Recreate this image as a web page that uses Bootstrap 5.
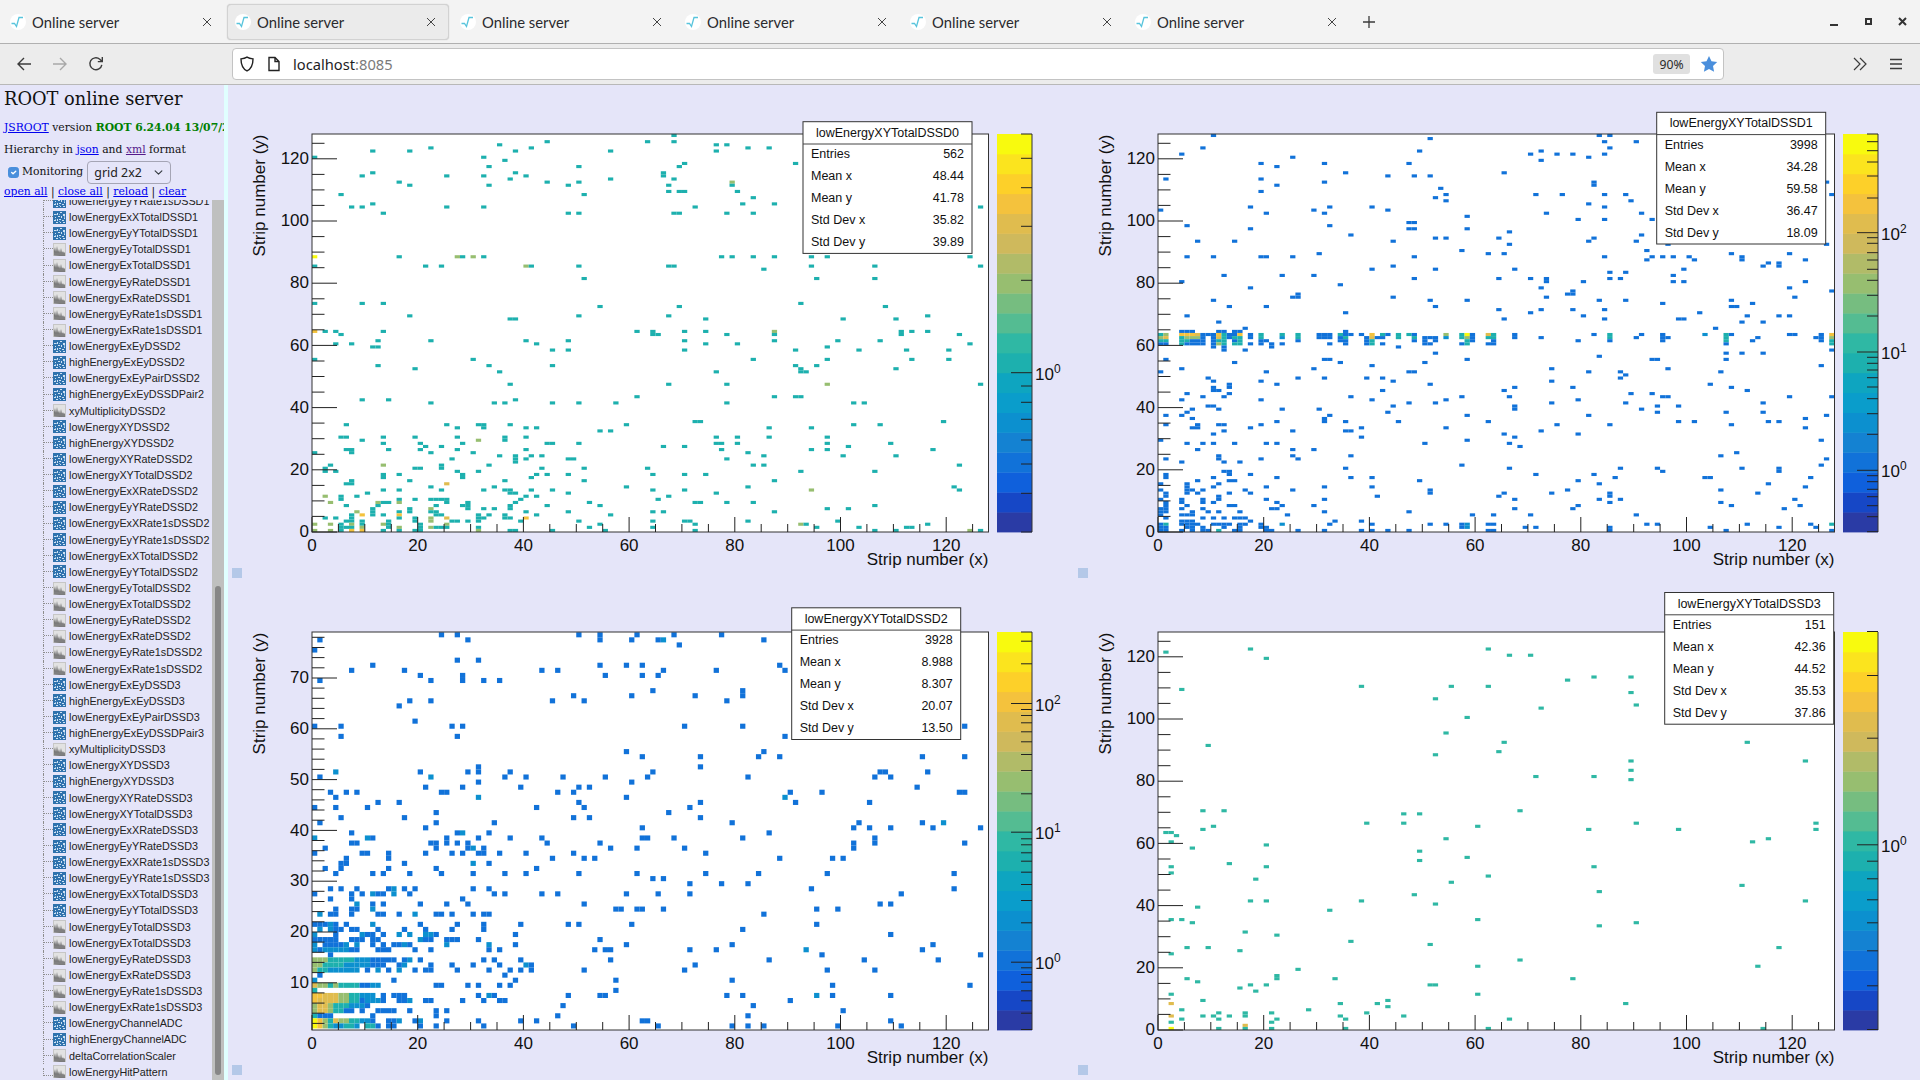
<!DOCTYPE html>
<html lang="en">
<head>
<meta charset="utf-8">
<title>Online server</title>
<link href="https://cdn.jsdelivr.net/npm/bootstrap@5.3.0/dist/css/bootstrap.min.css" rel="stylesheet">
<style>
html,body{height:1080px;overflow:hidden;background:#e5e5f9;}
body{font-family:"Liberation Sans",Arial,sans-serif;}
.tabbar{height:43px;background:#f3f3f3;padding-top:4px;}
.chrome-tab{width:225px;height:36px;padding:0 8px 0 9px;font:14.8px Lato,"Noto Sans",sans-serif;color:#2a2a2e;border:1px solid transparent;border-radius:4px;}
.chrome-tab.active{background:#ebebeb;border-color:#d2d2d2;box-shadow:0 0 1px #bbb;width:222px;margin:0 1px 0 2px;padding-left:7px;}
.chrome-tab .lbl{margin-left:6px;}
.plus{width:36px;height:36px;margin-left:1px;}
.win{margin-left:auto;padding-right:4px;}
.win svg{display:block;}
.toolbar{height:42px;background:#ececec;border-top:1px solid #b0b0b0;border-bottom:1px solid #b8b8b8;padding:0 6px;}
.tb-btn{width:36px;height:36px;}
.urlbar{width:1492px;height:32px;margin-left:118px;background:#fff;border:1px solid #c3c3c3;border-radius:4px;font:14.7px "Noto Sans",sans-serif;color:#1d1d1f;padding:0 5px 0 6px;}
.urlbar .dim{color:#7a7a7a;}
.zoomp{width:37px;height:20px;background:#e0e0e0;border-radius:3px;font-size:12.2px;color:#2a2a2a;margin-left:auto;margin-right:10px;}
.main{height:995px;}
.side{width:224px;background:#e5e5f9;font-family:"DejaVu Serif",serif;color:#111;white-space:nowrap;}
.side a{color:#0000ee;text-decoration:underline;}
.side a.vis{color:#551a8b;}
.side h1{font-size:17.8px;font-weight:400;margin:0;padding:2px 0 0 4px;height:26px;line-height:24px;color:#111;}
.side .ln{font-size:10.8px;padding-left:4px;overflow:hidden;}
.ln1{margin-top:6px;height:22px;line-height:22px;}
.ln2{height:22px;line-height:22px;}
.ln3{height:23px;padding-left:8px!important;}
.side .ln4{height:16px;line-height:15px;}
.ok{color:#008000;font-weight:700;}
.mon{width:11px;height:11px;margin:1px 3px 0 0;border-radius:2px;background-color:#4a8fdc;border-color:#4a8fdc;}
.mon:checked{background-color:#4a8fdc;border-color:#4a8fdc;}
.gridsel{width:84px;height:23px;min-height:0;padding:0 0 0 6px;margin-left:4px;font:12.4px "Noto Sans",sans-serif;color:#222;background-color:transparent;border:1px solid #a5a5b5;border-radius:4px;background-position:right 6px center;background-size:11px 9px;}
.treewrap{height:880px;}
.tree{width:212px;padding-left:43px;overflow:hidden;font-family:"Liberation Sans",sans-serif;font-size:10.8px;color:#222;}
.tree-in{margin-top:-7px;}
.t-row{height:16.13px;}
.t-join{width:10px;height:100%;border-left:1px dotted #8d8d8d;flex:none;}
.t-join::before{content:"";display:block;height:50%;border-bottom:1px dotted #8d8d8d;}
.t-row:last-child .t-join{height:50%;}
.t-row:last-child .t-join::before{height:100%;}
.t-ic{width:13px;height:13px;flex:none;margin-right:3px;}
.sb{width:12px;background:#bfc0bf;padding:386px 3px 0;}
.sb i{display:block;width:6px;height:489px;border-radius:3px;background:#878787;}
.splitter{width:4px;background:#e0ffff;}
.plots{width:1692px;background:#e5e5f9;}
.cell{height:497.5px;}
.cell svg.plot{display:block;width:846px;height:497.5px;font-family:"Liberation Sans",sans-serif;}
.jsb{left:4px;bottom:5px;width:10px;height:10px;background:#b4c8e8;}
</style>
</head>
<body>
<svg width="0" height="0" class="position-absolute">
 <symbol id="fav" viewBox="0 0 16 16"><circle cx="8" cy="8" r="8" fill="#fff"/><path d="M1.5 9.5h3l2 3 2.5-9h4" fill="none" stroke="#58c4dc" stroke-width="1.3"/></symbol>
 <symbol id="xx" viewBox="0 0 10 10"><path d="M1 1l8 8M9 1l-8 8" stroke="#444" stroke-width="1" fill="none"/></symbol>
 <symbol id="h1" viewBox="0 0 13 13"><rect x=".5" y=".5" width="12" height="12" fill="#e2e2e2" stroke="#c6c6c6"/><path d="M1 12V8l1-4 1 5 1-6 1 6 1-3 1 4 1-5 1 5 1-2 1 3 1 1v2z" fill="#777"/><path d="M1 12.500v-3h11v3z" fill="#808080"/></symbol>
 <symbol id="h2" viewBox="0 0 13 13"><rect width="13" height="13" fill="#2f72ad"/><path d="M1 3h2v1H1zM4 2h1v2H4zM7 1h2v1H7zM10 3h2v2h-2zM2 6h1v1H2zM5 5h2v1H5zM8 5h1v2H8zM11 7h1v1h-1zM1 9h2v1H1zM4 8h1v2H4zM6 8h2v1H6zM9 9h2v1H9zM3 11h2v1H3zM7 11h1v1H7zM10 11h2v1h-2z" fill="#cfe2f3"/><path d="M3 3h1v1H3zM6 3h1v1H6zM2 8h1v1H2zM6 10h1v1H6zM11 5h1v2h-1z" fill="#8ab8e0"/></symbol>
</svg>

<div class="tabbar d-flex align-items-start" id="tabs"></div>

<div class="toolbar d-flex align-items-center">
 <div class="tb-btn d-flex align-items-center justify-content-center"><svg width="16" height="16" viewBox="0 0 16 16"><path d="M15 8H2M8 2L2 8l6 6" fill="none" stroke="#3b3b3b" stroke-width="1.4"/></svg></div>
 <div class="tb-btn d-flex align-items-center justify-content-center"><svg width="16" height="16" viewBox="0 0 16 16"><path d="M1 8h13M8 2l6 6-6 6" fill="none" stroke="#a8a8a8" stroke-width="1.4"/></svg></div>
 <div class="tb-btn d-flex align-items-center justify-content-center"><svg width="16" height="16" viewBox="0 0 16 16"><path d="M13.800 8.800A6 6 0 1 1 11.800 3.200L14 5.400M14.300 1v4.600H9.800" fill="none" stroke="#3b3b3b" stroke-width="1.4"/></svg></div>
 <div class="urlbar d-flex align-items-center">
  <svg width="16" height="16" viewBox="0 0 16 16" class="me-1"><path d="M8 1.200c2 1.300 4 1.600 6 1.700 0 6-2 10-6 12-4-2-6-6-6-12 2-.1 4-.4 6-1.700z" fill="none" stroke="#222" stroke-width="1.4"/></svg>
  <svg width="14" height="16" viewBox="0 0 14 16" class="ms-2 me-2"><path d="M2 1.500h6l4 4v9H2zM8 1.500v4h4" fill="none" stroke="#222" stroke-width="1.4"/></svg>
  <span class="ms-1">localhost<span class="dim">:8085</span></span>
  <span class="zoomp d-flex align-items-center justify-content-center">90%</span>
  <svg width="18" height="18" viewBox="0 0 18 18"><path d="M9 1l2.500 5.300 5.700.7-4.200 4 1.100 5.700L9 14l-5.100 2.700L5 11 .8 7l5.700-.7z" fill="#4a8fdc"/></svg>
 </div>
 <div class="tb-btn d-flex align-items-center justify-content-center ms-auto"><svg width="16" height="16" viewBox="0 0 16 16"><path d="M2 2l6 6-6 6M8 2l6 6-6 6" fill="none" stroke="#3b3b3b" stroke-width="1.2"/></svg></div>
 <div class="tb-btn d-flex align-items-center justify-content-center"><svg width="16" height="16" viewBox="0 0 16 16"><path d="M2 3.500h12M2 8h12M2 12.500h12" fill="none" stroke="#3b3b3b" stroke-width="1.3"/></svg></div>
</div>

<div class="main d-flex">
 <div class="side d-flex flex-column overflow-hidden flex-none">
  <h1>ROOT online server</h1>
  <div class="ln ln1"><a href="#">JSROOT</a> version <span class="ok">ROOT 6.24.04 13/07/2021</span></div>
  <div class="ln ln2">Hierarchy in <a href="#">json</a> and <a href="#" class="vis">xml</a> format</div>
  <div class="ln ln3 d-flex align-items-center">
   <input class="form-check-input mon mt-0" type="checkbox" checked>
   <span>Monitoring</span>
   <select class="form-select gridsel"><option>grid 2x2</option></select>
  </div>
  <div class="ln ln4"><a href="#">open all</a> | <a href="#">close all</a> | <a href="#">reload</a> | <a href="#">clear</a></div>
  <div class="treewrap d-flex">
   <div class="tree"><div class="tree-in" id="tree"></div></div>
   <div class="sb"><i></i></div>
  </div>
 </div>
 <div class="splitter flex-none"></div>
 <div class="plots"><div class="row g-0" id="plots"></div></div>
</div>

<script>
// browser tabs
(function(){
 var h='';
 for(var i=0;i<6;i++){
  h+='<div class="chrome-tab d-flex align-items-center'+(i==1?' active':'')+'"><svg width="16" height="16"><use href="#fav"/></svg><span class="lbl">Online server</span><svg width="10" height="10" class="ms-auto me-1"><use href="#xx"/></svg></div>';
 }
 h+='<div class="plus d-flex align-items-center justify-content-center"><svg width="14" height="14" viewBox="0 0 14 14"><path d="M7 1v12M1 7h12" stroke="#3b3b3b" stroke-width="1.3"/></svg></div>';
 h+='<div class="win d-flex"><svg width="102" height="36" viewBox="0 0 102 36"><path d="M16 21h8" stroke="#333" stroke-width="2"/><rect x="52" y="15" width="5" height="5" fill="none" stroke="#333" stroke-width="2"/><path d="M85 14l7 7M92 14l-7 7" stroke="#333" stroke-width="2"/></svg></div>';
 document.getElementById('tabs').innerHTML=h;
})();
// tree
(function(){
 function block(n){return [['lowEnergyExEyDSSD'+n,2],['highEnergyExEyDSSD'+n,2],['lowEnergyExEyPairDSSD'+n,2],['highEnergyExEyDSSDPair'+n,2],['xyMultiplicityDSSD'+n,1],['lowEnergyXYDSSD'+n,2],['highEnergyXYDSSD'+n,2],['lowEnergyXYRateDSSD'+n,2],['lowEnergyXYTotalDSSD'+n,2],['lowEnergyExXRateDSSD'+n,2],['lowEnergyEyYRateDSSD'+n,2],['lowEnergyExXRate1sDSSD'+n,2],['lowEnergyEyYRate1sDSSD'+n,2],['lowEnergyExXTotalDSSD'+n,2],['lowEnergyEyYTotalDSSD'+n,2]].concat(tail(n));}
 function tail(n){return [['lowEnergyEyTotalDSSD'+n,1],['lowEnergyExTotalDSSD'+n,1],['lowEnergyEyRateDSSD'+n,1],['lowEnergyExRateDSSD'+n,1],['lowEnergyEyRate1sDSSD'+n,1],['lowEnergyExRate1sDSSD'+n,1]];}
 var rows=[['lowEnergyEyYRate1sDSSD1',2],['lowEnergyExXTotalDSSD1',2],['lowEnergyEyYTotalDSSD1',2]].concat(tail(1),block(2),block(3),[['lowEnergyChannelADC',2],['highEnergyChannelADC',2],['deltaCorrelationScaler',1],['lowEnergyHitPattern',1]]);
 document.getElementById('tree').innerHTML=rows.map(function(r){return '<div class="t-row d-flex align-items-center"><span class="t-join"></span><svg class="t-ic"><use href="#h'+r[1]+'"/></svg><span>'+r[0]+'</span></div>';}).join('');
})();
// plots
var P=['#2a3ba5','#1647c6','#0f60dc','#1172d9','#1482d2','#0c90cf','#0a9dcb','#0ea5c0','#1db0ae','#2fb8a4','#54bc92','#76bd80','#97be70','#b1bb68','#cfb95c','#e0bc4e','#f4c23d','#fdd029','#fbe41e','#f8fa0e'];
var L={b:P[3],c:P[5],t:P[8],e:P[9],g:P[12],s:P[15],o:P[16],y:P[19]};
var BW=5.285;
var plots=[
 {cx:228,cy:85,name:'lowEnergyXYTotalDSSD0',st:[575,36.7],v:['562','48.44','41.78','35.82','39.89'],bh:3.11,y0:0,ys:[0,20,40,60,80,100,120],ym:5,ymax:128,
  pal:[[134],[158.3],[187.7],[226.3],[280.3],[372.7,'0'],[386],[402.3],[419.3],[440],[464],[493.3],[532]],m:{}},
 {cx:1074,cy:85,name:'lowEnergyXYTotalDSSD1',st:[582.7,27.3],v:['3998','34.28','59.58','36.47','18.09'],bh:3.11,y0:0,ys:[0,20,40,60,80,100,120],ym:5,ymax:128,pal:[],m:{}},
 {cx:228,cy:582.5,name:'lowEnergyXYTotalDSSD2',st:[563.7,24.8],v:['3928','8.988','8.307','20.07','13.50'],bh:5.08,y0:.7,ys:[10,20,30,40,50,60,70],ym:2,ymax:79,pal:[],m:{}},
 {cx:1074,cy:582.5,name:'lowEnergyXYTotalDSSD3',st:[590.7,9.5],v:['151','42.36','44.52','35.53','37.86'],bh:3.11,y0:0,ys:[0,20,40,60,80,100,120],ym:5,ymax:128,pal:[],m:{}}
];
(function(){
 var a=[141.7,150.7,162,176,198,[232.7,'2']];
 [8,25,53,75,103,136,181,243,[351,'1'],367,385,405,428,456,491,536,598,[706,'0'],722,740,763,785,812,845,890].forEach(function(z){a.push(Array.isArray(z)?[235+z[0]/3,z[1]]:235+z/3);});
 plots[1].pal=[134].concat(a).map(function(t){return Array.isArray(t)?t:[t];});
 var b=[122,190,[309,'2'],327,345,367,394,424,462,510,580,[695,'1'],715,733,757,782,815,852,900,967,[1085,'0'],1102,1122,1145,1171,1201,1238,1287];
 plots[2].pal=[[631.5]].concat(b.map(function(z){return Array.isArray(z)?[600+z[0]/3,z[1]]:[600+z/3];}));
 var c=[153,285,473,[793,'0'],842,895,958,1027,1111,1216,1347];
 plots[3].pal=c.map(function(z){return Array.isArray(z)?[580+z[0]/3,z[1]]:[580+z/3];});
})();
function add(i,ox,oy,kx,ky,def,str){
 var p=plots[i];
 str.split(';').forEach(function(g){
  var q=g.trim().split(':'); if(q.length<2)return;
  var zy=parseFloat(q[0]);
  q[1].split(',').forEach(function(t){
   var x=parseFloat(t), l=t.replace(/[0-9.\s]/g,'')||def;
   var lx=ox+x/kx-p.cx, ly=oy+zy/ky-p.cy;
   var col=Math.floor((lx-84)/BW), row=Math.floor((447-ly)/p.bh+p.y0);
   if(col<0||col>127||row<0)return;
   p.m[col+'_'+row]=[col,row,L[l]];
  });
 });
}
// plot 0
add(0,220,110,2.8,3,'t',"76:1272;95:1272,916,1199;104:782,1390,1419;114:591,872,1480,1537;123:429,531,827,1093,1390;142:265,739;152:797;161:1301;170:754,1006,1287;189:827,429,1241;199:398,634,739,857,1241;208:812,1093,1272;217:502,916,1006,1435g;226:1435,531,754,975,1257;245:1257,1287,1301,1450;254:338,1021;264:1493;282:429,1465,1552;292:368,398,634,739,1331;310:459,975,1006,1272,1287,1419,1493;441:265y,502,665g,680,709g,739,1404,1435,1493,1552;469:265,576,620,857g,872,1006,1257,1272;479:1522;507:1021;581:265,398,459;590:1065,1287;618:531,1006,1257;628:812,827,1359;665:265o,294,324,459,1169,1213,1301,1359,1552g;674:338,1213,1228,1419,1552;692:444,591,857,975,1301,1552;701:324,368,887,1359,1450;711:429,444;720:931,975,1301;748:265,709,1493;767:444,754,931;777:546;787:782,1390;824:812,1257,1419;860:1169,1552;870:398,472,827;880:591,768,797,931,1006,1109,1419;936:1331,1345;945:354,634,724,739,812,1139;955:665,739,857,887,1537;964:1065,1093;982:338,354,459,546,665,797,857,1390,1450,1537;991:398,724g,797;1000:459,561,680,916,931,1006,1390,1404,1450;1010:576,620,1241,1301;1019:354,368,472,561,665,857,1404;1028:265,368,591,709,1480;1038:782,827,872,902,1522;1047:650,827,857,975,990,1419;1057:827;1066:310,459g,620,754,1493,1522;1075:294,546,561,620,902,1021,1199;1085:294,324,665,724;1094:459,502,680,887,916,975,1213,1301,1359;1104:459,680,872;1113:368,531,797,1021,1552;1122:354,368,634s;1131:591,768,1139,1480;1140:459,502,620,739,797,812,872,931,1213,1301;1150:413,812,827,975,1390;1160:294g,384,338,857,887,1257;1168:338,502,546,591,606,620,634,842,1228;1178:310g,444g,459,472,502g,634,695,827,1036,1331,1345,1419,1493;1188:354,444,680,695,812,606,916,1065;1197:429,531,591g,695,739,768,812;1206:384g,429,502,531,591,606,857,975,1213,1241,1552;1215:398o,368,429,459,502o,606,620,724,754,887,797,1093;1225:294,324,368,502,546,591g,634s,724,739,797,812,857o;1234:354,368,398,472,546,591g,650,665,695,724,842,1006,1213,1301,1316,1480;1243:265g,310g,338,368g,398,459g,472,561,634g,1065,1331;1253:338,354,368,398g,472,502g,561,591g,606,620,634,724,1036,1213;1262:265g,310g,338,368o,398o,459,502,546,561,724g,812,827,931,1078,1331");
add(0,780,110,3,3,'t',"161:48;292:601;441:93,142,569;469:93,284,601;507:110,284;581:64;590:317;618:443;628:190,349;665:365,396,443;674:365,540;692:174,300;701:569;711:142;720:48,237,381,507;748:142,396,507;767:48,110;777:64,349;787:64,78;824:142g,601;860:48,64;880:222,252;936:491;945:222,300;954:93;982:142;1000:142,333;1010:206;1019:93,142,459;1038:190,349;1066:540;1085:64,284;1131:524;1140:93g,540;1188:284;1197:142,206;1234:174;1243:64g,78,443;1253:110,237,381,396;1262:284,349,569g,601");
// plot 1
add(1,1150,125,3,3,'b',"32:191;41:842;69:158;79:809;88:96;97:428;116:334,524,777;125:382;144:586,1062;153:715,793,842;163:48,334;172:524;182:382;190:874;200:334;209:888;218:857;228:888;246:301,541,667;256:33,492,715;265:350,524;275:952;293:778,793;302:111,541;312:301,777,793,952;321:1075;330:602;339:857,888,1047;349:143,254,730;358:1075;377:935;386:508,1016,1062;396:111,191,334,350,428,793;433:667,857;424:730;452:223,398,492;462:793,1047;471:96;481:571;489:301;517:428,444,730;508:444;526:191,842,952;545:239,350,857;555:1047;564:586;573:111;583:1062;592:207;611:285;620:96,111,127,207,223,254,270,586;"+
"629:33t,48g,96o,111o,127o,143s,158,175,191,207o,223t,239,254,270o,301,334t,398t,444t,508,524,541,571t,586,602,635,667o,699t,715,745t,777t,793,888g,935t,952y,968,1016s,1032t;"+
"638:33g,48s,96t,111g,127g,143g,158,191,207s,223t,239,254t,270t,301,334t,398c,444t,508,524,541,571,586t,650,667s,683,699,745t,793t,825,841,857,888c,935t,952g,968,1016t,1032t;"+
"648:33t,48t,96t,111t,127,143,158,191,207t,223t,254,270t,334,350,444,571,586,650,667t,793,825,857,952t,968,1032;"+
"657:33,48,96t,111,127,143,158,191,207g,223t,254t,270t,301,334,365,398,541,586,650,667t,699,825,841,935,952t,1016,1032;"+
"666:191,223,365,745;676:223,285;685:857;704:48,524,541,952;713:254,571,825;722:667;732:96,492;742:33,350,778,793;761:175,444,524,651,699;770:191,334,730;779:239,382,842;788:239,191;797:191,207,699,1062;806:111,239;816:158,223,602,935,1075;825:96,334,667,888;834:778,857;844:175,191,730;853:127,207,398,508;862:111,715;872:48,96,541,952;881:127,524;890:382,524,586,745,1016;900:48,143,207,223,334;909:127,143,301,634,888;918:223,428,586,602;927:191,1062;936:634;945:33,952;955:111,158,191,254,350,382,825,1075;973:143,428,492;993:207,428,602;1002:48,207,334,444;1012:96,223,270;1021:935;1030:586,1075;1040:223,239;1049:48,239,301;1058:48,191,382,602,667;1068:143,239,254,809;1077:33,111,207;1085:111,191,350,524,667;1095:33,111,127,158,285,428,842;1104:48,111,143,239,301,842,1062;1113:48,207,683,1047;1123:96,158,207,350,524,33;1132:96,158,191,382,48;1141:48,111,239,254,398,492;1150:33,48,96,158,365,382;1161:33,48,127,175,207,270,524,778;1170:33,96,111,127,413,968,1032;1180:48,158,191,223,254,270,285;1189:96,111,127,301,634,558;1198:33,48t,96,111,127,143,191,207,223,239,270,285,334,398c,541,667,842,888,935,952c,1016,1032;1207:33,48,111,127,158,223,270,334,350,935,952c;1216:33,48,96,127,158,175,207t,254,270,350,365,444,524,634,667,715,778,1016,1032");
add(1,1500,0,3,3,'b',"406:298,329;425:313,410;444:329;454:125;463:93,170,219,313;472:267;482:125;520:12;544:284,980;554:284;584:109,186,313,378,995;603:393;615:267;622:313;640:140,426;659:236,313,457");
add(1,1500,235,3,3,'b',"1:426;8:284;19:267,410;28:28;29:505,980;47:442;57:12,695,870;66:313,457,487,520,568,727;76:442,585,918,727;85:805,836;94:789,836;104:44,553;113:329,378;123:520;132:93,139,329,361;141:139,252,520,553,918;159:125,870;170:219,996;178:203,219;187:139,886;197:298,378,695;206:488,759;215:696,712;225:125,219,313;234:93,601;243:252,743,838,870;253:12,313,536,552;262:727,789;282:647;298:284,426,696,870,886,44,488,616c,329t,679t,964,995o;308:44,125,329t,410,488,505,679t,772,948,964,995g;317:236,329,488,679t,759,964,995t;327:679,995t;345:995;355:679,727,789;364:298;374:460,475,679;393:964;402:155,504;412:267,361,662;421:378;430:361;440:155;449:630;458:44,219,695;467:12,743;477:393,457;486:28,488,504,870,996;495:236;505:155,378,789;514:44,472,536;524:44,426;533:472,679,789;542:267,980;552:918;561:536,584,805,838;570:171,329,695;580:918;589:125;598:12,236;607:44;617:964;626:28;635:60;654:711;664:662;673:980;692:964;701:28,361,472,727,838;710:488,838;720:109,284;729:345,616,632,932;738:236;748:298,805;757:918;766:203,662;775:12,155,329,773;785:329;794:44,298,361,886;803:329,662;813:236,695,902;822:44,219,853;841:93,410;869:442,472,743,932,996t;878:76,109,329,630,838,948;888:329,679,996");
// plot 2
add(2,220,600,2.8,3,'b',"100:620,665,1006,1063,1169,1272,1404;115:280,695,1063,1154,1228,1241c,1522;130:1287;146:265;177:665,724;192:429,1063,1139,1184,1565;207:368,516,903,946,1242,1389;222:561,680,1078,1184,1228;237:280,591,680,739,782;268:1213,1465;283:991,1154,1331,1465;298:531,591,931,1021,1419;314:502;360:546;376:265,338,650,680,1301,1465;406:338,665;452:1139,1522;467:1184,1345,1507,1565;497:724,1345;513:324c,561,695,724,812,1213;528:280,591c,797,857,960,1078,1199,1480;544:724,1154;559:576,680,842,1006,1036;575:310,354,384,620,634,946,991;590:324,724c,1139;605:444,502,1006,1345;621:265,324,413,887,1021,1316;636:606,1257;650:338,516,991,1036,1345;666:280,606,768,1435;682:576,1184;696:368,665,680c,754,1537;712:265c,413c,429,634,724,812,903,1184,1199,1272,1465;727:368,384,591,606,634,665,695,917,1063;742:294,606,695,710c,739,1093,1169,1301;758:265,398,413,472,576,650,680,724,739,782,857,991,1359;774:354,472,931,1021,1050,1565;788:338,354,516,710c,754;804:294,338,472,606,887;820:324,429,459,531,620,710,797,857,1006,1169,1359,1507;835:1213,1242;850:1316,1404,1480;866:310,338,384,472,487c,516,546,710,754;880:265,368,398,429c,444,459,487c,531,768,797,903,946,1139,1228,1316;895:310,368,680;911:384c,429,459,561,634,695,1021;926:324,368,384,429c,1109,1124,1169,1184,1242;941:280c,310,324,368,444,459,502,546c,606,620,650,710,739,754,1522;972:265,280,294,310c,324,354,429c,561,665,739,842,975,1006,1154;987:280c,310c,324,338,368,384,444,516,576,650,739,1465;1002:265c,324,398c,413,429,459,502c,531c,576c,591c,606,827;1018:265,280,294,310,324,368,384,398,429,444,561c,576,591,634,650,665,724,1064;1033:265c,294,310,324,338,354c,384c,429,459,487,502,516c,531,634c,754c,827,1139,1435;1048:265c,280,294c,310c,324c,338c,354c,368,384,444,459,472,546,591,754,782,1050,1078,1093,1316,1389;1064:310;"+
"1079:265g,280g,294g,310t,324t,338t,354t,368t,384c,398c,413c,429,444,459,472,487,516,531c,561,739,768,842,1093,1537;"+
"1094:265g,280g,294t,310t,324t,338t,354c,368c,384c,398c,413c,429,444,459,502,516c,591,650,710,782,857c,872,1331;"+
"1110:265g,280t,294t,310c,324c,338c,354c,368c,384c,413,444c,472,502c,546,576,591,665,754,812,842,872,1021,1301;"+
"1125:280,797;1140:265c,487,827,1109,1435;"+
"1156:265s,280g,294g,310t,324g,338t,354t,368t,384t,398,413,429c,444c,606,620,695,724,782,812;1170:265t,1109;"+
"1186:265o,280o,294s,310s,324s,338g,354g,368t,384t,398c,413c,429c,459,487,502,516,724,754c,768,975,1064,1078,1419,1465;"+
"1201:265o,280s,294s,310s,324s,338g,354g,368t,384t,398,413c,429c,444c,459,502,516,531c,576,591,680,739,782,797;"+
"1216:265g,280s,294s,310g,324t,338t,354t,368c,384c,398c,413,961,1493;"+
"1231:265g,280s,294s,310g,324t,338t,354,368,398,444,459,472,487,531,606,634;"+
"1247:265t,280,294,310,429,606,946,1480;"+
"1263:265y,280o,294g,310t,324s,338g,354g,368t,384t,398c,413c,429,472,487,502c,546,561c,634,724,842,887,1184,1199;"+
"1278:265y,280o,294g,310t,324c,338c,354t,368t,384c,413t,429t,444,472,487,561,606,739,991,1228,1435,1480,1522");
add(2,760,600,3,3,'b',"115:11;192:60;207:76;376:615;405:76;451:11;467:60,487,615;513:360,376,503;528:344,393;559:471;575:92,186,599,614;590:76c;605:108,328;666:297,487,551c;681:282,328,393,519,662;696:27;712:344;727:282,344,615;742:282;774:60,218,250;820:202,584;866:153,584;880:425;911:360,393;926:170,234;941:11;972:170;1002:393;1033:519;1048:139c,487;1064:186,662;1079:27,312,535;1110:202,344;1156:218,630;1186:170c,218,393;1201:92;1232:250;1263:393;1278:11,234,425");
// plot 3
add(3,1100,620,3,3,'e',"85:451,1166;94:199;113:500;197:785,1053,1166;206:246;234:1008;290:1102;337:1039;374:325;393:1196;402:1008;570:309,373;580:911,960;607:801,911;617:341,1134;627:309;635:199,215;645:230;654:1039;663:215;673:500;682:277;691:960;710:1102;719:960;729:390;738:215,500;757:215;767:1166;776:468;785:1053;822:943;841:451,500,785;850:1008;860:293;869:690;897:215,246,1134;906:277;934:435;943:532;962:752;971:991;980:261,325;990:419;999:215;1037:1134;1047:594;1066:532;1075:261,532,707;1084:293;1092:451,500,991,1007;1101:419;1111:468;1121:215,1134;1139:309,866;1148:215s,721,833;1158:866;1167:246,626;1177:357,516,435,801;1186:215s,309,341,390,435,721,911;1195:246,357,532,737;1205:215,516;1215:435s;1224:215y,357,435,516,737,1166");
add(3,1500,580,3,3,'e',"224:28,93;290:284,393;299:203;336:393;373:410;382:125;484:12,743;541:393,918;569:393;588:109,284;598:393;690:60;727:410,948;746:267,536,948;773:805;783:759;858:284;913:727;932:298;960:918;1026:410;1035:298;1100:838;1137:60;1157:773;1194:219;1268:377;1315:28;1343:789");

function draw(p){
 var s='<rect x="84" y="49" width="676.500" height="398" fill="#fff"/>';
 Object.keys(p.m).forEach(function(k){
  var c=p.m[k];
  var y=447-(c[1]+1-p.y0)*p.bh, h=p.bh;
  if(y+h>447)h=447-y;
  s+='<rect x="'+(84+c[0]*BW).toFixed(2)+'" y="'+y.toFixed(2)+'" width="'+BW+'" height="'+h.toFixed(2)+'" fill="'+c[2]+'"/>';
 });
 s+='<rect x="84" y="49" width="676.500" height="398" fill="none" stroke="#333" stroke-width="1"/>';
 var tk='';
 for(var v=0;v<=125;v+=5){var x=84+v*BW,l=v%20==0?15:8;tk+='M'+x.toFixed(1)+' 447v-'+l;}
 for(var u=Math.ceil(p.y0/p.ym)*p.ym;u<p.ymax;u+=p.ym){
  var y=447-(u-p.y0)*p.bh,maj=p.ys.indexOf(u)>=0;
  tk+='M84 '+y.toFixed(1)+'h'+(maj?25:12.5);
 }
 s+='<path d="'+tk+'" stroke="#222" stroke-width="1" fill="none"/>';
 for(var a=0;a<=120;a+=20)s+='<text x="'+(84+a*BW).toFixed(1)+'" y="465.500" text-anchor="middle" font-size="17" fill="#111">'+a+'</text>';
 p.ys.forEach(function(b){s+='<text x="81" y="'+(447-(b-p.y0)*p.bh+5.2).toFixed(1)+'" text-anchor="end" font-size="17" fill="#111">'+b+'</text>';});
 s+='<text x="760.500" y="480" text-anchor="end" font-size="17" fill="#111">Strip number (x)</text>';
 s+='<text transform="translate(37 49.500) rotate(-90)" text-anchor="end" font-size="17" fill="#111">Strip number (y)</text>';
 var n=P.length,bh=398/n;
 for(var i=0;i<n;i++)s+='<rect x="769" y="'+(447-(i+1)*bh).toFixed(2)+'" width="35" height="'+(bh+.4).toFixed(2)+'" fill="'+P[i]+'"/>';
 s+='<path d="M804 49v398" stroke="#333" fill="none"/>';
 p.pal.forEach(function(t){
  var ly=t[0]-p.cy,big=t[1]!==undefined;
  s+='<path d="M804 '+ly.toFixed(1)+'h-'+(big?21:11)+'" stroke="#222" fill="none"/>';
  if(big)s+='<text x="807" y="'+(ly+7).toFixed(1)+'" font-size="17" fill="#111">10<tspan dy="-7" font-size="12">'+t[1]+'</tspan></text>';
 });
 var X=p.st[0],Y=p.st[1],W=169,T=['Entries','Mean x','Mean y','Std Dev x','Std Dev y'];
 s+='<rect x="'+X+'" y="'+Y+'" width="'+W+'" height="131.700" fill="#fff" stroke="#333"/>';
 s+='<path d="M'+X+' '+(Y+22.3)+'h'+W+'" stroke="#444" fill="none"/>';
 s+='<text x="'+(X+W/2)+'" y="'+(Y+15)+'" text-anchor="middle" font-size="12.5" fill="#111">'+p.name+'</text>';
 T.forEach(function(t,i){
  var by=Y+36.3+i*22;
  s+='<text x="'+(X+8)+'" y="'+by+'" font-size="12.5" fill="#111">'+t+'</text><text x="'+(X+W-8)+'" y="'+by+'" text-anchor="end" font-size="12.5" fill="#111">'+p.v[i]+'</text>';
 });
 return s;
}
document.getElementById('plots').innerHTML=plots.map(function(p){
 return '<div class="col-6 cell position-relative"><svg class="plot" viewBox="0 0 846 497.5">'+draw(p)+'</svg><div class="jsb position-absolute"></div></div>';
}).join('');
</script>
<script src="https://cdn.jsdelivr.net/npm/bootstrap@5.3.0/dist/js/bootstrap.bundle.min.js"></script>
</body>
</html>
